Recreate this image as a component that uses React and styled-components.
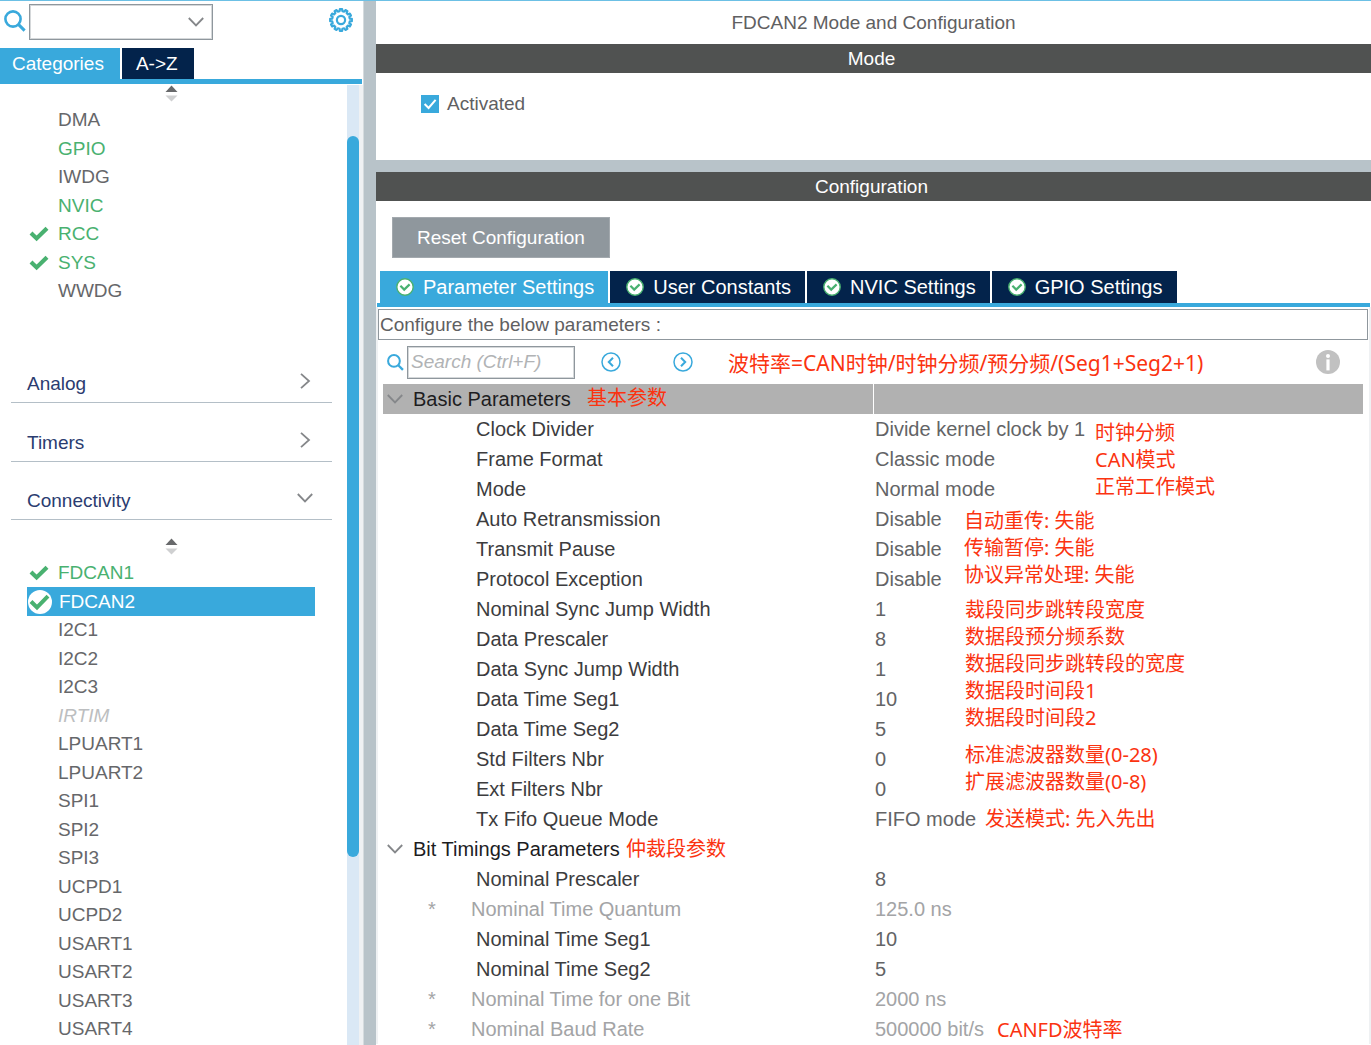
import React, { useState } from 'react'
import styled, { createGlobalStyle, css } from 'styled-components'

const GlobalStyle = createGlobalStyle`
    * {
        box-sizing: border-box;
    }

    body {
        margin: 0;
        background-color: #fff;
        color: #5f6062;
        font-family: "Liberation Sans", "Noto Sans CJK SC", sans-serif;
        font-size: 19px;
    }

    button, input, select {
        font: inherit;
        color: inherit;
    }

    button {
        padding: 0;
        border: 0;
        background: none;
        text-align: left;
        cursor: pointer;
    }

    svg {
        display: block;
        flex: none;
    }
`

const Shell = styled.div`
    display: grid;
    grid-template-columns: 363px 13px minmax(0, 1fr);
    height: 100vh;
    overflow: hidden;
    border-top: 1px solid #6cc0e5;
`

const Splitter = styled.div`
    background-color: #b8c3c9;
    border-left: 1px solid #d5dbde;
`

/* ---------- sidebar ---------- */

const Sidebar = styled.aside`
    display: flex;
    flex-direction: column;
    min-height: 0;
`

const SearchRow = styled.div`
    display: flex;
    align-items: flex-start;
    height: 47px;
    padding: 3px 10px 0 4px;

    > svg {
        margin-top: 6px;
    }
`

const ComboBox = styled.label`
    display: grid;
    align-items: center;
    width: 184px;
    margin: 0 auto 0 3px;

    select {
        grid-area: 1 / 1;
        width: 100%;
        height: 36px;
        border: 1px solid #8f979d;
        outline: 1px solid #d5d8da;
        outline-offset: -2px;
        border-radius: 0;
        background-color: #fff;
        appearance: none;
    }

    svg {
        grid-area: 1 / 1;
        justify-self: end;
        margin-right: 9px;
        pointer-events: none;
    }
`

const GearButton = styled.button`
    margin-top: 4px;
`

const TabBar = styled.div`
    display: flex;
    gap: 2px;
    margin-right: 1px;
    border-bottom: ${({ $line }) => $line}px solid #39a9dc;
`

const SideTab = styled.button`
    height: 31px;
    padding: 0 16px 0 12px;
    background-color: ${({ $active }) => ($active ? '#39a9dc' : '#03234b')};
    color: #fff;

    &:last-child {
        padding-left: 14px;
    }
`

const SideBody = styled.div`
    display: flex;
    flex: 1;
    min-height: 0;
    margin-top: 1px;
`

const Catalog = styled.nav`
    flex: 1;
    min-width: 0;
    overflow: hidden;
    padding: 0 15px 0 11px;
`

const SortRow = styled.div`
    display: flex;
    justify-content: center;
    height: ${({ $tall }) => ($tall ? 39 : 21)}px;
    padding-top: ${({ $tall }) => ($tall ? 18 : 0)}px;
`

const PeriphList = styled.ul`
    margin: 0;
    padding: 0 17px 0 16px;
    list-style: none;
`

const toneColors = {
    plain: '#66676a',
    on: '#49b170',
    off: '#bcbec0',
    current: '#fff',
}

const PeriphItem = styled.li`
    height: 28px;
    background-color: ${({ $tone }) => ($tone === 'current' ? '#39a9dc' : 'transparent')};
    color: ${({ $tone }) => toneColors[$tone]};
    font-style: ${({ $tone }) => ($tone === 'off' ? 'italic' : 'normal')};

    &:nth-child(even) {
        height: 29px;
    }

    button {
        display: grid;
        grid-template-columns: 24px 1fr;
        column-gap: 7px;
        align-items: center;
        width: 100%;
        height: 100%;
        padding-left: ${({ $tone }) => ($tone === 'current' ? 1 : 0)}px;
    }

    svg {
        justify-self: center;
    }
`

const SectionButton = styled.button`
    display: flex;
    justify-content: space-between;
    align-items: flex-end;
    width: 100%;
    height: 58px;
    margin-top: ${({ $first }) => ($first ? 40 : 0)}px;
    padding: 0 19px 7px 16px;
    border-bottom: 1px solid #b4bfc7;
    color: #2b3c70;

    &:nth-of-type(even) {
        height: 59px;
    }

    svg {
        margin-bottom: 6px;
    }
`

const ScrollTrack = styled.div`
    width: 12px;
    padding: 51px 0 188px;
    background-color: #dae8f5;
`

const ScrollThumb = styled.div`
    height: 100%;
    border-radius: 6px;
    background-color: #39a9dc;
`

const SideEdge = styled.div`
    width: 4px;
    background-color: #eff1f3;
`

/* ---------- main panel ---------- */

const Main = styled.main`
    display: flex;
    flex-direction: column;
    min-width: 0;
`

const Title = styled.h1`
    margin: 0;
    font-size: 19px;
    font-weight: normal;
    line-height: 43px;
    text-align: center;
`

const Banner = styled.h2`
    margin: 0;
    padding-right: 4px;
    background-color: #505251;
    color: #fff;
    font-size: 19px;
    font-weight: normal;
    line-height: 29px;
    text-align: center;
`

const ModePane = styled.section`
    height: 87px;
    padding: 20px 45px;
`

const PaneGap = styled.div`
    height: 12px;
    background-color: #b8c3c9;
`

const CheckLabel = styled.label`
    display: inline-grid;
    grid-template-columns: 18px auto;
    column-gap: 8px;
    align-items: center;

    input {
        grid-area: 1 / 1;
        width: 18px;
        height: 18px;
        margin: 0;
        background-color: #fff;
        border: 1px solid #39a9dc;
        appearance: none;
    }

    input:checked {
        background-color: #39a9dc;
    }

    svg {
        grid-area: 1 / 1;
        pointer-events: none;
    }
`

const ConfigPane = styled.section`
    padding-top: 16px;
`

const ResetButton = styled.button`
    height: 41px;
    margin: 0 16px 13px;
    padding: 0 24px;
    border: 1px solid #a3a9ae;
    background-color: #8f979d;
    color: #fff;
`

const SettingsTabs = styled(TabBar)`
    margin-left: 1px;
    padding-left: 3px;
`

const SettingsTab = styled.button`
    display: flex;
    align-items: center;
    gap: 9px;
    height: 32px;
    padding: 0 14px 0 16px;
    background-color: ${({ $active }) => ($active ? '#39a9dc' : '#03234b')};
    color: #fff;
    font-size: 20px;
    white-space: nowrap;
`

const TabBody = styled.div`
    border: solid #eff1f3;
    border-width: 0 2px;
    padding-top: 2px;
`

const Hint = styled.p`
    margin: 0;
    padding-left: 1px;
    margin-right: 1px;
    border: 1px solid #8f979d;
    line-height: 29px;
`

const FilterRow = styled.div`
    display: flex;
    align-items: center;
    height: 44px;
    padding: 0 29px 0 9px;
`

const FilterInput = styled.input`
    width: 168px;
    height: 33px;
    margin: 0 26px 0 3px;
    padding: 0 3px;
    border: 1px solid #8f979d;
    outline: 1px solid #d5d8da;
    outline-offset: -2px;

    &::placeholder {
        color: #b1b3b5;
        font-style: italic;
        opacity: 1;
    }
`

const StepButton = styled.button`
    margin-right: ${({ $gap }) => $gap}px;
`

const noteFont = css`
    color: #fb3310;
    font-family: "Noto Sans", "Noto Sans CJK SC", sans-serif;
    white-space: nowrap;
`

const Formula = styled.span`
    ${noteFont}
    font-size: 21px;
    margin-right: auto;
`

const TableWrap = styled.div`
    position: relative;
    margin: 0 6px 0 5px;
`

const ParamTable = styled.table`
    width: 100%;
    table-layout: fixed;
    border-collapse: collapse;
    font-size: 20px;

    th, td {
        height: 30px;
        padding: 0 0 0 2px;
        font-weight: normal;
        line-height: 28px;
        text-align: left;
        white-space: nowrap;
    }
`

const GroupRow = styled.tr`
    color: #1d1d1f;

    th, td {
        background-color: ${({ $selected }) => ($selected ? '#b1b1b1' : '#fff')};
    }

    th {
        border-right: 1px solid #fff;
    }

    th button {
        display: flex;
        align-items: center;
        gap: 10px;
        margin-left: 2px;
    }
`

const ParamRow = styled.tr`
    color: ${({ $locked }) => ($locked ? '#a3a4a6' : '#636466')};

    th {
        padding-left: ${({ $locked }) => ($locked ? 45 : 93)}px;
        color: ${({ $locked }) => ($locked ? '#a3a4a6' : '#3c3c3e')};
    }
`

const Star = styled.span`
    display: inline-block;
    width: 43px;
`

const Note = styled.div`
    ${noteFont}
    position: absolute;
    top: ${({ $top }) => $top}px;
    left: ${({ $left }) => $left};
    font-size: 20px;
    line-height: 27px;
`

/* ---------- icons ---------- */

const SearchIcon = ({ size = 22 }) => (
    <svg width={size} height={size} viewBox="0 0 22 22" fill="none" stroke="#39a9dc" strokeWidth="2.6">
        <circle cx="9" cy="9" r="7.6" />
        <path d="M14.6 14.6 L20.6 20.6" strokeWidth="3" />
    </svg>
)

const Chevron = ({ right }) => (
    <svg width="16" height="16" viewBox="0 0 16 16" fill="none" stroke="#85878a" strokeWidth="1.8">
        <path d={right ? 'M4 0.8 L12 8 L4 15.2' : 'M0.8 4 L8 11.4 L15.2 4'} />
    </svg>
)

const SortIcon = () => (
    <svg width="13" height="17" viewBox="0 0 13 17">
        <path d="M6.5 0.5 L12.5 7 H0.5 Z" fill="#68696b" />
        <path d="M6.5 16.5 L12.5 10.5 H0.5 Z" fill="#cfd0d1" />
    </svg>
)

const TickIcon = () => (
    <svg width="20" height="16" viewBox="0 0 20 16" fill="none" stroke="#49b170" strokeWidth="4.2">
        <path d="M2 7 L7.6 12.4 L18 2.2" />
    </svg>
)

const TickDisc = () => (
    <svg width="24" height="24" viewBox="0 0 24 24" fill="none">
        <circle cx="12" cy="12" r="12" fill="#fff" />
        <path d="M3 11.5 L9 17.5 L20 6.2" stroke="#49b170" strokeWidth="4" />
    </svg>
)

const StatusIcon = () => (
    <svg width="18" height="18" viewBox="0 0 18 18" fill="none" stroke="#49b170">
        <circle cx="9" cy="9" r="8.2" fill="#fff" strokeWidth="1.4" />
        <path d="M4.4 7.8 L8.2 11.6 L13.6 6.4" strokeWidth="2.2" />
    </svg>
)

const gearPath = (() => {
    const teeth = 12
    const step = (Math.PI * 2) / teeth
    const points = []
    for (let i = 0; i < teeth; i++) {
        const a = i * step - Math.PI / 2
        ;[[-0.3, 8.9], [-0.2, 10.9], [0.2, 10.9], [0.3, 8.9]].forEach(([t, r]) => {
            points.push(`${(12 + r * Math.cos(a + t * step)).toFixed(2)} ${(12 + r * Math.sin(a + t * step)).toFixed(2)}`)
        })
    }
    return `M${points.join(' L')} Z`
})()

const GearIcon = () => (
    <svg width="24" height="24" viewBox="0 0 24 24" fill="none" stroke="#39a9dc" strokeWidth="2.2" strokeLinejoin="round">
        <path d={gearPath} />
        <circle cx="12" cy="12" r="4.1" />
    </svg>
)

const StepIcon = ({ next }) => (
    <svg width="20" height="20" viewBox="0 0 20 20" fill="none" stroke="#39a9dc" strokeWidth="1.5">
        <circle cx="10" cy="10" r="9" />
        <path d={next ? 'M8 5.8 L12.2 10 L8 14.2' : 'M12 5.8 L7.8 10 L12 14.2'} strokeWidth="2" />
    </svg>
)

const InfoIcon = () => (
    <svg width="24" height="24" viewBox="0 0 24 24">
        <circle cx="12" cy="12" r="12" fill="#c1c1c1" />
        <circle cx="12" cy="6" r="2" fill="#fff" />
        <rect x="10.4" y="9.4" width="3.2" height="11" fill="#fff" />
    </svg>
)

/* ---------- data ---------- */

const systemCore = [
    { name: 'DMA' },
    { name: 'GPIO', tone: 'on' },
    { name: 'IWDG' },
    { name: 'NVIC', tone: 'on' },
    { name: 'RCC', tone: 'on', tick: true },
    { name: 'SYS', tone: 'on', tick: true },
    { name: 'WWDG' },
]

const connectivity = [
    { name: 'FDCAN1', tone: 'on', tick: true },
    { name: 'FDCAN2', tone: 'current', tick: true },
    { name: 'I2C1' },
    { name: 'I2C2' },
    { name: 'I2C3' },
    { name: 'IRTIM', tone: 'off' },
    { name: 'LPUART1' },
    { name: 'LPUART2' },
    { name: 'SPI1' },
    { name: 'SPI2' },
    { name: 'SPI3' },
    { name: 'UCPD1' },
    { name: 'UCPD2' },
    { name: 'USART1' },
    { name: 'USART2' },
    { name: 'USART3' },
    { name: 'USART4' },
]

const basicParams = [
    ['Clock Divider', 'Divide kernel clock by 1'],
    ['Frame Format', 'Classic mode'],
    ['Mode', 'Normal mode'],
    ['Auto Retransmission', 'Disable'],
    ['Transmit Pause', 'Disable'],
    ['Protocol Exception', 'Disable'],
    ['Nominal Sync Jump Width', '1'],
    ['Data Prescaler', '8'],
    ['Data Sync Jump Width', '1'],
    ['Data Time Seg1', '10'],
    ['Data Time Seg2', '5'],
    ['Std Filters Nbr', '0'],
    ['Ext Filters Nbr', '0'],
    ['Tx Fifo Queue Mode', 'FIFO mode'],
]

const bitParams = [
    ['Nominal Prescaler', '8'],
    ['Nominal Time Quantum', '125.0 ns', true],
    ['Nominal Time Seg1', '10'],
    ['Nominal Time Seg2', '5'],
    ['Nominal Time for one Bit', '2000 ns', true],
    ['Nominal Baud Rate', '500000 bit/s', true],
]

// left is measured from the table edge, or from the value column (50%)
const notes = [
    { top: 0, left: '204px', lines: ['基本参数'] },
    { top: 35, left: 'calc(50% + 222px)', lines: ['时钟分频', 'CAN模式', '正常工作模式'] },
    { top: 123, left: 'calc(50% + 91px)', lines: ['自动重传: 失能', '传输暂停: 失能', '协议异常处理: 失能'] },
    {
        top: 212,
        left: 'calc(50% + 92px)',
        lines: ['裁段同步跳转段宽度', '数据段预分频系数', '数据段同步跳转段的宽度', '数据段时间段1', '数据段时间段2'],
    },
    { top: 357, left: 'calc(50% + 92px)', lines: ['标准滤波器数量(0-28)', '扩展滤波器数量(0-8)'] },
    { top: 421, left: 'calc(50% + 112px)', lines: ['发送模式: 先入先出'] },
    { top: 451, left: '243px', lines: ['仲裁段参数'] },
    { top: 632, left: 'calc(50% + 124px)', lines: ['CANFD波特率'] },
]

const settingsTabs = ['Parameter Settings', 'User Constants', 'NVIC Settings', 'GPIO Settings']

/* ---------- pieces ---------- */

function Peripherals({ items }) {
    return (
        <PeriphList>
            {items.map(({ name, tone = 'plain', tick }) => (
                <PeriphItem key={name} $tone={tone}>
                    <button type="button">
                        {tick ? (tone === 'current' ? <TickDisc /> : <TickIcon />) : <span />}
                        {name}
                    </button>
                </PeriphItem>
            ))}
        </PeriphList>
    )
}

function ParamGroup({ title, rows, selected }) {
    return (
        <tbody>
            <GroupRow $selected={selected}>
                <th scope="rowgroup">
                    <button type="button">
                        <Chevron />
                        {title}
                    </button>
                </th>
                <td />
            </GroupRow>
            {rows.map(([name, value, locked]) => (
                <ParamRow key={name} $locked={locked}>
                    <th scope="row">
                        {locked && <Star>*</Star>}
                        {name}
                    </th>
                    <td>{value}</td>
                </ParamRow>
            ))}
        </tbody>
    )
}

export default function App() {
    const [activated, setActivated] = useState(true)
    const [tab, setTab] = useState(settingsTabs[0])

    return (
        <>
            <GlobalStyle />
            <Shell>
                <Sidebar>
                    <SearchRow>
                        <SearchIcon />
                        <ComboBox>
                            <select aria-label="Search peripheral" />
                            <Chevron />
                        </ComboBox>
                        <GearButton type="button" aria-label="Settings">
                            <GearIcon />
                        </GearButton>
                    </SearchRow>
                    <TabBar $line={5}>
                        <SideTab type="button" $active>Categories</SideTab>
                        <SideTab type="button">A-&gt;Z</SideTab>
                    </TabBar>
                    <SideBody>
                        <Catalog>
                            <SortRow><SortIcon /></SortRow>
                            <Peripherals items={systemCore} />
                            <SectionButton type="button" $first>Analog<Chevron right /></SectionButton>
                            <SectionButton type="button">Timers<Chevron right /></SectionButton>
                            <SectionButton type="button">Connectivity<Chevron /></SectionButton>
                            <SortRow $tall><SortIcon /></SortRow>
                            <Peripherals items={connectivity} />
                        </Catalog>
                        <ScrollTrack>
                            <ScrollThumb />
                        </ScrollTrack>
                        <SideEdge />
                    </SideBody>
                </Sidebar>

                <Splitter />

                <Main>
                    <Title>FDCAN2 Mode and Configuration</Title>
                    <Banner>Mode</Banner>
                    <ModePane>
                        <CheckLabel>
                            <input type="checkbox" checked={activated} onChange={(e) => setActivated(e.target.checked)} />
                            {activated && (
                                <svg width="18" height="18" viewBox="0 0 18 18" fill="none" stroke="#fff" strokeWidth="2">
                                    <path d="M3.6 9 L7.6 13 L14.6 4.8" />
                                </svg>
                            )}
                            <span>Activated</span>
                        </CheckLabel>
                    </ModePane>
                    <PaneGap />
                    <Banner>Configuration</Banner>
                    <ConfigPane>
                        <ResetButton type="button">Reset Configuration</ResetButton>
                        <SettingsTabs $line={4}>
                            {settingsTabs.map((name) => (
                                <SettingsTab key={name} type="button" $active={name === tab} onClick={() => setTab(name)}>
                                    <StatusIcon />
                                    {name}
                                </SettingsTab>
                            ))}
                        </SettingsTabs>
                        <TabBody>
                            <Hint>Configure the below parameters :</Hint>
                            <FilterRow>
                                <SearchIcon size={17} />
                                <FilterInput type="text" aria-label="Search parameters" placeholder="Search (Ctrl+F)" />
                                <StepButton type="button" aria-label="Previous" $gap={52}><StepIcon /></StepButton>
                                <StepButton type="button" aria-label="Next" $gap={35}><StepIcon next /></StepButton>
                                <Formula>波特率=CAN时钟/时钟分频/预分频/(Seg1+Seg2+1)</Formula>
                                <InfoIcon />
                            </FilterRow>
                            <TableWrap>
                                <ParamTable>
                                    <ParamGroup title="Basic Parameters" rows={basicParams} selected />
                                    <ParamGroup title="Bit Timings Parameters" rows={bitParams} />
                                </ParamTable>
                                {notes.map(({ top, left, lines }) => (
                                    <Note key={lines[0]} $top={top} $left={left}>
                                        {lines.map((line) => <div key={line}>{line}</div>)}
                                    </Note>
                                ))}
                            </TableWrap>
                        </TabBody>
                    </ConfigPane>
                </Main>
            </Shell>
        </>
    )
}
